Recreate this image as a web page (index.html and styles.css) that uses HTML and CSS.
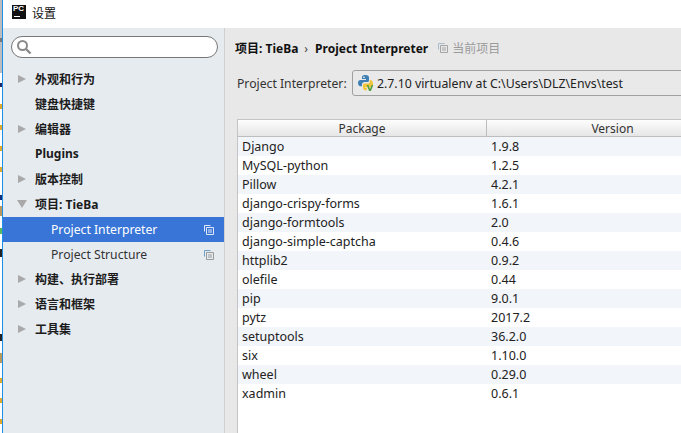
FILE: index.html
```html
<!DOCTYPE html>
<html>
<head>
    <title>设置</title>
    <link rel="stylesheet" href="styles.css">
</head>
<body>
    <div class="page">
        <div class="behind-strip"></div>
        <div class="window">
            <div class="titlebar">
                <div class="app-logo"><span class="app-logo-text">PC</span><span class="app-logo-bar"></span></div>
                <span class="title-text">设置</span>
            </div>
            <div class="main">
                <div class="sidebar">
                    <div class="search">
                        <svg width="16" height="16" viewBox="0 0 16 16">
                            <circle cx="6.500" cy="6.500" r="4.500" fill="none" stroke="#8a8a8a" stroke-width="2"/>
                            <path d="M10 10l4.500 4.500" stroke="#8a8a8a" stroke-width="2.400"/>
                        </svg>
                    </div>
                    <ul class="tree">
                        <li class="tree-row"><span class="arrow"></span>外观和行为</li>
                        <li class="tree-row"><span class="arrow-space"></span>键盘快捷键</li>
                        <li class="tree-row"><span class="arrow"></span>编辑器</li>
                        <li class="tree-row tree-bold"><span class="arrow-space"></span>Plugins</li>
                        <li class="tree-row"><span class="arrow"></span>版本控制</li>
                        <li class="tree-row tree-bold"><span class="arrow-open"></span>项目: TieBa</li>
                        <li class="tree-row tree-child selected">Project Interpreter
                            <svg class="copy-icon" width="10" height="10" viewBox="0 0 10 10">
                                <path d="M.5 6.500v-6h6M2.500 2.500h7v7h-7zM4 5h4M4 7h4" fill="none" stroke="#dfe8f7"/>
                            </svg>
                        </li>
                        <li class="tree-row tree-child">Project Structure
                            <svg class="copy-icon" width="10" height="10" viewBox="0 0 10 10">
                                <path d="M.5 6.500v-6h6" fill="none" stroke="#6f9fc4"/>
                                <path d="M2.500 2.500h7v7h-7zM4 5h4M4 7h4" fill="none" stroke="#9a9a9a"/>
                            </svg>
                        </li>
                        <li class="tree-row"><span class="arrow"></span>构建、执行部署</li>
                        <li class="tree-row"><span class="arrow"></span>语言和框架</li>
                        <li class="tree-row"><span class="arrow"></span>工具集</li>
                    </ul>
                </div>
                <div class="content">
                    <div class="breadcrumb">
                        <span class="crumb-bold">项目: TieBa</span>
                        <span class="crumb-sep">›</span>
                        <span class="crumb-bold">Project Interpreter</span>
                        <svg class="crumb-icon" width="10" height="10" viewBox="0 0 10 10">
                            <path d="M.5 6.500v-6h6" fill="none" stroke="#a9bccb"/>
                            <path d="M2.500 2.500h7v7h-7zM4 5h4M4 7h4" fill="none" stroke="#a5a5a5"/>
                        </svg>
                        <span class="crumb-note">当前项目</span>
                    </div>
                    <div class="interpreter">
                        <label class="interpreter-label">Project Interpreter:</label>
                        <div class="combo">
                            <svg width="16" height="16" viewBox="0 0 16 16">
                                <path d="M7.500 0C4.500 0 4 1.200 4 2.500V4h4v1H2.500C1 5 0 6.200 0 8s1 3.200 2.500 3.200H4V9.500C4 8 5 7 6.500 7h3C10.500 7 11 6.300 11 5.500v-3C11 1 9.800 0 7.500 0z" fill="#3d7fb5"/>
                                <circle cx="6" cy="2.300" r=".8" fill="#fff"/>
                                <path d="M11.700 5v1.500C11.700 8 10.700 8.500 9.500 8.500h-3C5.500 8.500 5 9 5 10v3c0 1.500 1.500 2.500 3 2.500l1-1V13H7v-.8h5.500c1.500 0 2.500-1.500 2.500-3.500S14 5 12.500 5z" fill="#f2c53d"/>
                                <path d="M9.500 10l2.500 6 2.500-6" fill="none" stroke="#4f9e3a" stroke-width="1.600"/>
                            </svg>
                            <span>2.7.10 virtualenv at C:\Users\DLZ\Envs\test</span>
                        </div>
                    </div>
                    <div class="table">
                        <div class="table-head">
                            <div class="col-package head-cell">Package</div>
                            <div class="col-version head-cell">Version</div>
                        </div>
                        <div class="table-row"><div class="col-package">Django</div><div class="col-version">1.9.8</div></div>
                        <div class="table-row"><div class="col-package">MySQL-python</div><div class="col-version">1.2.5</div></div>
                        <div class="table-row"><div class="col-package">Pillow</div><div class="col-version">4.2.1</div></div>
                        <div class="table-row"><div class="col-package">django-crispy-forms</div><div class="col-version">1.6.1</div></div>
                        <div class="table-row"><div class="col-package">django-formtools</div><div class="col-version">2.0</div></div>
                        <div class="table-row"><div class="col-package">django-simple-captcha</div><div class="col-version">0.4.6</div></div>
                        <div class="table-row"><div class="col-package">httplib2</div><div class="col-version">0.9.2</div></div>
                        <div class="table-row"><div class="col-package">olefile</div><div class="col-version">0.44</div></div>
                        <div class="table-row"><div class="col-package">pip</div><div class="col-version">9.0.1</div></div>
                        <div class="table-row"><div class="col-package">pytz</div><div class="col-version">2017.2</div></div>
                        <div class="table-row"><div class="col-package">setuptools</div><div class="col-version">36.2.0</div></div>
                        <div class="table-row"><div class="col-package">six</div><div class="col-version">1.10.0</div></div>
                        <div class="table-row"><div class="col-package">wheel</div><div class="col-version">0.29.0</div></div>
                        <div class="table-row"><div class="col-package">xadmin</div><div class="col-version">0.6.1</div></div>
                    </div>
                </div>
            </div>
        </div>
    </div>
</body>
</html>
```

FILE: styles.css
```css
html, body {
    margin: 0;
    height: 100%;
    overflow: hidden;
}

body {
    font-family: "Noto Sans", "Noto Sans CJK SC", sans-serif;
    font-size: 12px;
    color: #1a1a1a;
    background-color: #fff;
}

.page {
    height: 433px;
    display: flex;
}

/* sliver of the window underneath, left of the dialog edge */
.behind-strip {
    width: 2px;
    flex: none;
    background: linear-gradient(to bottom,
        #bdbdbd 0 38px, #777 38px 42px, #bdbdbd 42px 73px,
        #fff 73px 83px, #1b2a6b 83px 87px, #fff 87px 104px,
        #e0a92e 104px 109px, #fff 109px 125px,
        #e0a92e 125px 130px, #fff 130px 146px,
        #e0a92e 146px 151px, #fff 151px 167px,
        #e0a92e 167px 172px, #fff 172px 195px,
        #12307e 195px 200px, #fff 200px 206px,
        #b9995e 206px 216px, #fff 216px 228px,
        #5cb85c 228px 234px, #fff 234px 249px,
        #222 249px 257px, #fff 257px 334px,
        #222 334px 341px, #fff 341px 353px,
        #b9995e 353px 363px, #fff 363px 378px,
        #e0a92e 378px 383px, #fff 383px 398px,
        #e0a92e 398px 403px, #fff 403px 419px,
        #e0a92e 419px 424px, #fff 424px);
}

.window {
    flex: 1;
    min-width: 0;
    display: flex;
    flex-direction: column;
    border-left: 1px solid #1e8fe6;
}

.titlebar {
    height: 28px;
    flex: none;
    box-sizing: border-box;
    display: flex;
    align-items: center;
    padding: 0 0 4px 9px;
    background-color: #fff;
}

.app-logo {
    width: 14px;
    height: 14px;
    background-color: #111;
    margin-right: 6px;
}

.app-logo-text {
    display: block;
    color: #fff;
    font-family: "Liberation Sans", sans-serif;
    font-size: 8px;
    font-weight: bold;
    line-height: 8px;
    padding-left: 1px;
}

.app-logo-bar {
    display: block;
    width: 6px;
    height: 1px;
    margin: 3px 0 0 2px;
    background-color: #fff;
}

.title-text {
    font-size: 12px;
    color: #111;
    padding-top: 2px;
}

.main {
    flex: 1;
    display: flex;
    min-height: 0;
}

.sidebar {
    width: 221px;
    flex: none;
    background-color: #e6ebf0;
    border-right: 1px solid #d0d0d0;
}

.search {
    height: 20px;
    margin: 8px 6px 0 8px;
    border: 1px solid #777;
    border-radius: 11px;
    background-color: #fff;
    display: flex;
    align-items: center;
    padding-left: 4px;
}

.tree {
    list-style-type: none;
    margin: 9px 0 0;
    padding: 0;
}

.tree-row {
    height: 25px;
    box-sizing: border-box;
    padding-bottom: 2px;
    display: flex;
    align-items: center;
    font-size: 12px;
    font-weight: 600;
    padding-left: 14px;
    color: #1c1c1c;
}

.tree-bold {
    font-weight: 700;
}

.arrow {
    width: 0;
    height: 0;
    margin: 0 9px 0 1px;
    border-left: 8px solid #a9a9a9;
    border-top: 4px solid transparent;
    border-bottom: 4px solid transparent;
}

.arrow-space {
    width: 18px;
}

.arrow-open {
    width: 0;
    height: 0;
    margin-right: 8px;
    border-top: 8px solid #a9a9a9;
    border-left: 5px solid transparent;
    border-right: 5px solid transparent;
}

.tree-child {
    font-size: 12.2px;
    font-weight: 400;
    padding-bottom: 0;
    padding-left: 48px;
    padding-right: 10px;
    justify-content: space-between;
    color: #333;
}

.selected {
    background-color: #3875d7;
    color: #fff;
}

.content {
    flex: 1;
    min-width: 0;
    background-color: #e8e8e8;
    padding-left: 12px;
    overflow: hidden;
}

.breadcrumb {
    height: 20px;
    margin: 10px 0 0 -2px;
    display: flex;
    align-items: center;
    white-space: nowrap;
}

.crumb-bold {
    font-weight: 700;
    color: #111;
}

.crumb-sep {
    margin: 0 7px 0 6px;
    color: #444;
}

.crumb-icon {
    margin: 0 4px 0 10px;
}

.crumb-note {
    color: #9b9b9b;
}

.interpreter {
    display: flex;
    align-items: center;
    margin: 12px 0 0;
    height: 26px;
    white-space: nowrap;
}

.interpreter-label {
    width: 115px;
    flex: none;
    font-size: 12.2px;
    color: #333;
}

.combo {
    flex: 1;
    height: 26px;
    margin-right: -10px;
    box-sizing: border-box;
    display: flex;
    align-items: center;
    gap: 3px;
    padding-left: 5px;
    border: 1px solid #a0a0a0;
    border-radius: 3px;
    background-color: #e9e9e9;
    font-size: 12.3px;
    color: #222;
}

.table {
    margin-top: 23px;
    width: 500px;
    height: 320px;
    border: 1px solid #c4c4c4;
    border-right: none;
    background-color: #fff;
}

.table-head {
    display: flex;
    height: 16px;
    border-bottom: 1px solid #bdbdbd;
    background: linear-gradient(#fdfdfd, #e6e6e6);
}

.col-package {
    width: 249px;
    flex: none;
    padding-left: 4px;
    box-sizing: border-box;
    border-right: 1px solid #bdbdbd;
}

.col-version {
    flex: 1;
    padding-left: 4px;
}

.table-head .head-cell {
    text-align: center;
    line-height: 18px;
    color: #333;
    padding: 0;
}

.table-row {
    display: flex;
    height: 19px;
    line-height: 19px;
    font-size: 12.5px;
    color: #222;
}

.table-row .col-package {
    border-right: 1px solid transparent;
}

.table-row:nth-child(even) {
    background-color: #f2f5f9;
}
```
